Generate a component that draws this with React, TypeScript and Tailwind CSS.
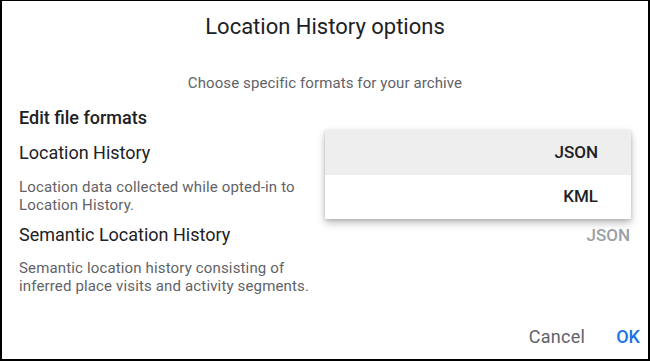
import React from "react";

export default function App() {
  return (
    <div
      className="relative w-[650px] h-[361px] bg-white border-black border-t border-l-2 border-r-2 border-b-2 overflow-hidden"
      style={{ fontFamily: "Roboto, 'Noto Sans', sans-serif" }}
    >
      <div className="flex flex-col h-full">
        <div className="text-center text-[22px] leading-[28px] text-[#202124] mt-[12px]">
          Location History options
        </div>
        <div className="text-center text-[15px] leading-[20px] text-[#5f6368] mt-[32px] tracking-[0.1px]">
          Choose specific formats for your archive
        </div>
        <div className="pl-[17px] pr-[17px]">
          <div className="text-[18px] leading-[22px] font-medium text-[#202124] mt-[14px]">
            Edit file formats
          </div>
          <div className="flex justify-between items-center mt-[13px]">
            <span className="text-[18px] leading-[22px] text-[#202124]">Location History</span>
          </div>
          <div className="text-[15px] leading-[18px] text-[#5f6368] mt-[14px] w-[296px] tracking-[0.15px]">
            Location data collected while opted-in to Location History.
          </div>
          <div className="flex justify-between items-center mt-[10px]">
            <span className="text-[18px] leading-[22px] text-[#202124]">Semantic Location History</span>
            <span className="text-[17px] leading-[22px] font-medium text-[#9aa0a6] mr-[1px]">JSON</span>
          </div>
          <div className="text-[15px] leading-[18px] text-[#5f6368] mt-[13px] w-[296px] tracking-[0.15px]">
            Semantic location history consisting of inferred place visits and activity segments.
          </div>
        </div>
        <div className="flex justify-end items-center gap-[31px] mt-auto mb-[10px] pr-[8px]">
          <span className="text-[18px] leading-[24px] text-[#5f6368] tracking-[0.3px]">Cancel</span>
          <span className="text-[18px] leading-[24px] font-medium text-[#1a73e8]">OK</span>
        </div>
      </div>

      <div className="absolute left-[323px] top-[129px] w-[306px] bg-white shadow-[0_4px_8px_rgba(0,0,0,0.25),0_1px_3px_rgba(0,0,0,0.15)]">
        <div className="h-[45px] bg-[#eeeeee] flex items-center justify-end pr-[33px] text-[17px] font-medium text-[#202124]">
          JSON
        </div>
        <div className="h-[44px] flex items-center justify-end pr-[33px] text-[17px] font-medium text-[#202124]">
          KML
        </div>
      </div>
    </div>
  );
}
